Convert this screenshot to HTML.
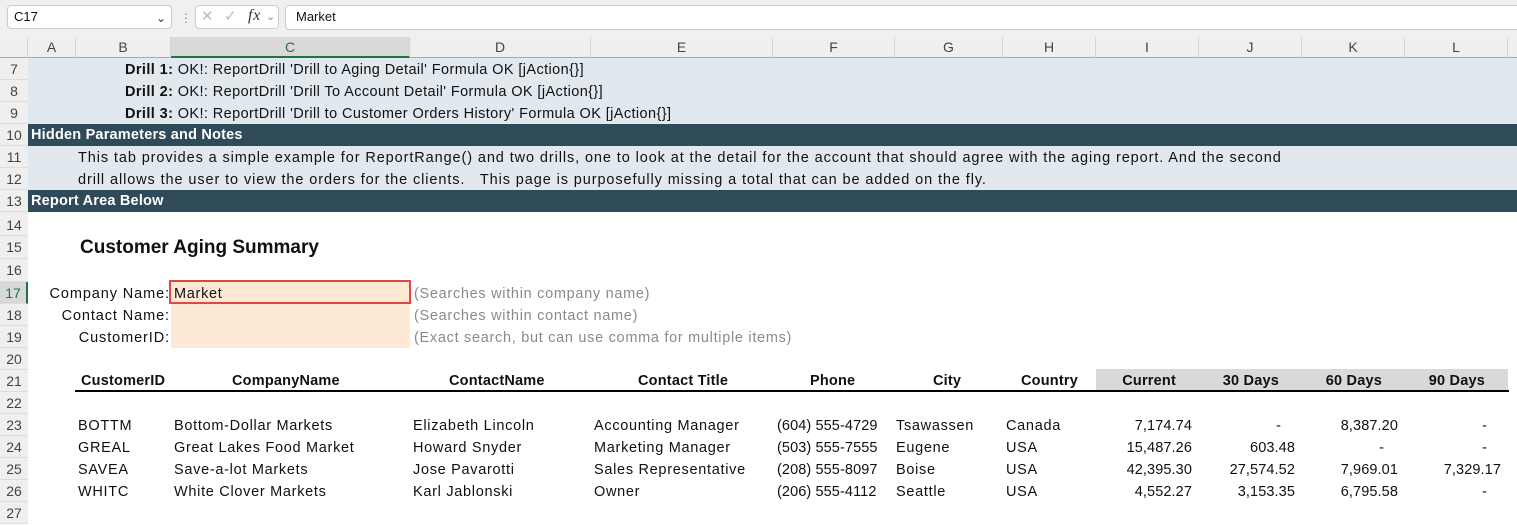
<!DOCTYPE html><html><head><meta charset="utf-8"><style>
body{margin:0;width:1517px;height:510px;overflow:hidden;background:#fff;font-family:"Liberation Sans","DejaVu Sans",sans-serif;font-size:14.5px;color:#111;position:relative}
.a{position:absolute;white-space:nowrap;line-height:24px;letter-spacing:0.7px}
.r{position:absolute;left:0;width:28px;text-align:center;color:#444;font-size:14px;background:#efefef;border-bottom:1px solid #ddd;box-sizing:border-box;letter-spacing:0;line-height:23px}
.ch{position:absolute;top:37px;height:21px;line-height:21px;text-align:center;color:#444;font-size:14px;border-right:1px solid #d4d4d4;box-sizing:border-box}
.b{font-weight:bold;letter-spacing:0.2px}
.g{color:#8a8a8a}
.rt{text-align:right}
.n{letter-spacing:0.1px}
.d{letter-spacing:0.4px}
</style></head><body>
<div style="position:absolute;left:0;top:0;width:1517px;height:37px;background:#f0f0f0"></div>
<div style="position:absolute;left:7px;top:5px;width:165px;height:24px;background:#fff;border:1px solid #ccc;border-radius:4px;box-sizing:border-box"></div>
<div class="a" style="left:14px;top:6px;font-size:13px;letter-spacing:0;line-height:22px">C17</div>
<div class="a" style="left:156px;top:6px;font-size:12px;color:#333">&#8964;</div>
<div class="a" style="left:180px;top:6px;font-size:12px;color:#888">⋮</div>
<div style="position:absolute;left:195px;top:5px;width:84px;height:24px;background:#fff;border:1px solid #ccc;border-radius:4px;box-sizing:border-box"></div>
<div class="a" style="left:201px;top:5px;font-size:15px;color:#bbb">✕ &nbsp;✓</div>
<div class="a" style="left:248px;top:4px;font-size:16px;font-style:italic;font-family:'Liberation Serif',serif;color:#333">fx</div>
<div class="a" style="left:266px;top:5px;font-size:11px;color:#888">&#8964;</div>
<div style="position:absolute;left:285px;top:5px;width:1240px;height:25px;background:#fff;border:1px solid #ccc;border-radius:4px;box-sizing:border-box"></div>
<div class="a" style="left:296px;top:6px;font-size:13px;letter-spacing:0;line-height:22px">Market</div>
<div style="position:absolute;left:0;top:37px;width:1517px;height:21px;background:#efefef;border-bottom:1px solid #aaa;box-sizing:border-box"></div>
<div class="ch" style="left:0;width:28px"></div>
<div class="ch" style="left:28px;width:48px">A</div>
<div class="ch" style="left:76px;width:95px">B</div>
<div class="ch" style="left:171px;width:239px;background:#d9d9d9;color:#217346;border-bottom:2px solid #217346">C</div>
<div class="ch" style="left:410px;width:181px">D</div>
<div class="ch" style="left:591px;width:182px">E</div>
<div class="ch" style="left:773px;width:122px">F</div>
<div class="ch" style="left:895px;width:108px">G</div>
<div class="ch" style="left:1003px;width:93px">H</div>
<div class="ch" style="left:1096px;width:103px">I</div>
<div class="ch" style="left:1199px;width:103px">J</div>
<div class="ch" style="left:1302px;width:103px">K</div>
<div class="ch" style="left:1405px;width:103px">L</div>
<div style="position:absolute;left:28px;top:58px;width:1489px;height:132px;background:#e1e9ef"></div>
<div style="position:absolute;left:28px;top:124px;width:1489px;height:22px;background:#2f4b5a"></div>
<div style="position:absolute;left:28px;top:190px;width:1489px;height:22px;background:#2f4b5a"></div>
<div class="r" style="top:58px;height:22px">7</div>
<div class="r" style="top:80px;height:22px">8</div>
<div class="r" style="top:102px;height:22px">9</div>
<div class="r" style="top:124px;height:22px">10</div>
<div class="r" style="top:146px;height:22px">11</div>
<div class="r" style="top:168px;height:22px">12</div>
<div class="r" style="top:190px;height:22px">13</div>
<div class="r" style="top:212px;height:24px;line-height:26px">14</div>
<div class="r" style="top:236px;height:23px">15</div>
<div class="r" style="top:259px;height:23px">16</div>
<div class="r" style="top:282px;height:22px;background:#d9d9d9;color:#217346;border-right:2px solid #217346">17</div>
<div class="r" style="top:304px;height:22px">18</div>
<div class="r" style="top:326px;height:22px">19</div>
<div class="r" style="top:348px;height:22px">20</div>
<div class="r" style="top:370px;height:22px">21</div>
<div class="r" style="top:392px;height:22px">22</div>
<div class="r" style="top:414px;height:22px">23</div>
<div class="r" style="top:436px;height:22px">24</div>
<div class="r" style="top:458px;height:22px">25</div>
<div class="r" style="top:480px;height:22px">26</div>
<div class="r" style="top:502px;height:22px">27</div>
<div class="a d" style="left:125px;top:58px"><b>Drill 1:</b> OK!: ReportDrill 'Drill to Aging Detail' Formula OK [jAction{}]</div>
<div class="a d" style="left:125px;top:80px"><b>Drill 2:</b> OK!: ReportDrill 'Drill To Account Detail' Formula OK [jAction{}]</div>
<div class="a d" style="left:125px;top:102px"><b>Drill 3:</b> OK!: ReportDrill 'Drill to Customer Orders History' Formula OK [jAction{}]</div>
<div class="a b" style="left:31px;top:123px;color:#fff">Hidden Parameters and Notes</div>
<div class="a" style="left:78px;top:146px;letter-spacing:0.9px">This tab provides a simple example for ReportRange() and two drills, one to look at the detail for the account that should agree with the aging report. And the second</div>
<div class="a" style="left:78px;top:168px;letter-spacing:0.9px">drill allows the user to view the orders for the clients.&nbsp;&nbsp; This page is purposefully missing a total that can be added on the fly.</div>
<div class="a b" style="left:31px;top:189px;color:#fff">Report Area Below</div>
<div class="a b" style="left:80px;top:236px;font-size:19px;line-height:24px;letter-spacing:0">Customer Aging Summary</div>
<div style="position:absolute;left:171px;top:282px;width:239px;height:66px;background:#fde9d5"></div>
<div style="position:absolute;left:169px;top:280px;width:242px;height:24px;border:2px solid #e04848;box-sizing:border-box"></div>
<div class="a rt" style="left:28px;width:142px;top:282px;letter-spacing:0.9px">Company Name:</div>
<div class="a rt" style="left:28px;width:142px;top:304px;letter-spacing:0.9px">Contact Name:</div>
<div class="a rt" style="left:28px;width:142px;top:326px;letter-spacing:0.9px">CustomerID:</div>
<div class="a" style="left:174px;top:282px">Market</div>
<div class="a g" style="left:414px;top:282px">(Searches within company name)</div>
<div class="a g" style="left:414px;top:304px">(Searches within contact name)</div>
<div class="a g" style="left:414px;top:326px">(Exact search, but can use comma for multiple items)</div>
<div style="position:absolute;left:1096px;top:369px;width:412px;height:22px;background:#d9d9d9"></div>
<div style="position:absolute;left:75px;top:390px;width:1434px;height:2px;background:#000"></div>
<div class="a b" style="left:81px;top:369px">CustomerID</div>
<div class="a b" style="left:232px;top:369px">CompanyName</div>
<div class="a b" style="left:449px;top:369px">ContactName</div>
<div class="a b" style="left:638px;top:369px">Contact Title</div>
<div class="a b" style="left:810px;top:369px">Phone</div>
<div class="a b" style="left:933px;top:369px">City</div>
<div class="a b" style="left:1021px;top:369px">Country</div>
<div class="a b rt" style="left:1096px;width:80px;top:369px">Current</div>
<div class="a b rt" style="left:1199px;width:80px;top:369px">30 Days</div>
<div class="a b rt" style="left:1302px;width:80px;top:369px">60 Days</div>
<div class="a b rt" style="left:1405px;width:80px;top:369px">90 Days</div>
<div class="a" style="left:78px;top:414px">BOTTM</div><div class="a" style="left:174px;top:414px">Bottom-Dollar Markets</div><div class="a" style="left:413px;top:414px">Elizabeth Lincoln</div><div class="a" style="left:594px;top:414px">Accounting Manager</div><div class="a n" style="left:777px;top:414px">(604) 555-4729</div><div class="a" style="left:896px;top:414px">Tsawassen</div><div class="a" style="left:1006px;top:414px">Canada</div>
<div class="a rt n" style="left:1096px;width:96px;top:414px">7,174.74</div><div class="a rt n" style="left:1199px;width:82px;top:414px">-</div><div class="a rt n" style="left:1302px;width:96px;top:414px">8,387.20</div><div class="a rt n" style="left:1405px;width:82px;top:414px">-</div>
<div class="a" style="left:78px;top:436px">GREAL</div><div class="a" style="left:174px;top:436px">Great Lakes Food Market</div><div class="a" style="left:413px;top:436px">Howard Snyder</div><div class="a" style="left:594px;top:436px">Marketing Manager</div><div class="a n" style="left:777px;top:436px">(503) 555-7555</div><div class="a" style="left:896px;top:436px">Eugene</div><div class="a" style="left:1006px;top:436px">USA</div>
<div class="a rt n" style="left:1096px;width:96px;top:436px">15,487.26</div><div class="a rt n" style="left:1199px;width:96px;top:436px">603.48</div><div class="a rt n" style="left:1302px;width:82px;top:436px">-</div><div class="a rt n" style="left:1405px;width:82px;top:436px">-</div>
<div class="a" style="left:78px;top:458px">SAVEA</div><div class="a" style="left:174px;top:458px">Save-a-lot Markets</div><div class="a" style="left:413px;top:458px">Jose Pavarotti</div><div class="a" style="left:594px;top:458px">Sales Representative</div><div class="a n" style="left:777px;top:458px">(208) 555-8097</div><div class="a" style="left:896px;top:458px">Boise</div><div class="a" style="left:1006px;top:458px">USA</div>
<div class="a rt n" style="left:1096px;width:96px;top:458px">42,395.30</div><div class="a rt n" style="left:1199px;width:96px;top:458px">27,574.52</div><div class="a rt n" style="left:1302px;width:96px;top:458px">7,969.01</div><div class="a rt n" style="left:1405px;width:96px;top:458px">7,329.17</div>
<div class="a" style="left:78px;top:480px">WHITC</div><div class="a" style="left:174px;top:480px">White Clover Markets</div><div class="a" style="left:413px;top:480px">Karl Jablonski</div><div class="a" style="left:594px;top:480px">Owner</div><div class="a n" style="left:777px;top:480px">(206) 555-4112</div><div class="a" style="left:896px;top:480px">Seattle</div><div class="a" style="left:1006px;top:480px">USA</div>
<div class="a rt n" style="left:1096px;width:96px;top:480px">4,552.27</div><div class="a rt n" style="left:1199px;width:96px;top:480px">3,153.35</div><div class="a rt n" style="left:1302px;width:96px;top:480px">6,795.58</div><div class="a rt n" style="left:1405px;width:82px;top:480px">-</div>
</body></html>
